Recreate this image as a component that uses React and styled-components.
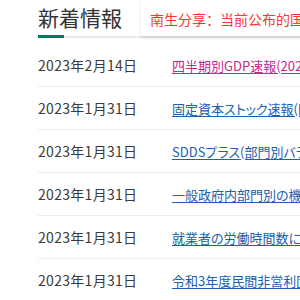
import React from 'react';
import styled, { createGlobalStyle } from 'styled-components';

const GlobalStyle = createGlobalStyle`
  body {
    margin: 0;
    background: #fff;
    font-family: "Noto Sans CJK JP", "Noto Sans", sans-serif;
    overflow: hidden;
  }
`;

const Page = styled.div`
  position: relative;
  width: 300px;
  height: 300px;
  overflow: hidden;
  padding-left: 38px;
  box-sizing: border-box;
`;

const Heading = styled.h2`
  position: relative;
  margin: 0;
  padding-top: 2px;
  height: 34px;
  font-size: 21px;
  font-weight: 400;
  line-height: 30px;
  color: #333;
  border-bottom: 2px solid #eaeaea;
  width: 400px;

  &::after {
    content: '';
    position: absolute;
    left: 0;
    bottom: -2px;
    width: 26px;
    height: 3px;
    background: #007a5c;
  }
`;

const Notice = styled.div`
  position: absolute;
  top: 0;
  left: 141px;
  width: 200px;
  height: 36px;
  background: #fff;
  box-shadow: 0 2px 3px rgba(0, 0, 0, 0.12);
  padding-left: 9px;
  box-sizing: border-box;
  color: #ff3333;
  font-family: "Noto Sans CJK SC", "Noto Sans", sans-serif;
  font-size: 14px;
  line-height: 39px;
  white-space: nowrap;
  overflow: hidden;
`;

const List = styled.ul`
  list-style: none;
  margin: 6px 0 0;
  padding: 0;
`;

const Row = styled.li`
  display: flex;
  align-items: center;
  height: 42px;
  border-bottom: 1px solid #ececec;
  white-space: nowrap;
  width: 400px;
`;

const Date = styled.span`
  width: 134px;
  flex: none;
  font-size: 14px;
  color: #3a3a3a;
  letter-spacing: 0.3px;
`;

const Title = styled.a`
  font-size: 13px;
  font-feature-settings: "palt";
  color: ${p => (p.$visited ? '#c8288c' : '#2160b0')};
  text-decoration: underline;
  text-underline-offset: 2px;
`;

const news = [
  { date: '2023年2月14日', title: '四半期別GDP速報(2022年10-12月期・1次速報)', visited: true },
  { date: '2023年1月31日', title: '固定資本ストック速報(四半期別)' },
  { date: '2023年1月31日', title: 'SDDSプラス(部門別バランスシート)' },
  { date: '2023年1月31日', title: '一般政府内部門別の機能別支出' },
  { date: '2023年1月31日', title: '就業者の労働時間数に係る推計' },
  { date: '2023年1月31日', title: '令和3年度民間非営利団体実態調査' },
];

export default function App() {
  return (
    <Page>
      <GlobalStyle />
      <Heading>新着情報</Heading>
      <Notice>南生分享：当前公布的国民经济计算数据</Notice>
      <List>
        {news.map((n, i) => (
          <Row key={i}>
            <Date>{n.date}</Date>
            <Title href="#" $visited={n.visited}>{n.title}</Title>
          </Row>
        ))}
      </List>
    </Page>
  );
}
